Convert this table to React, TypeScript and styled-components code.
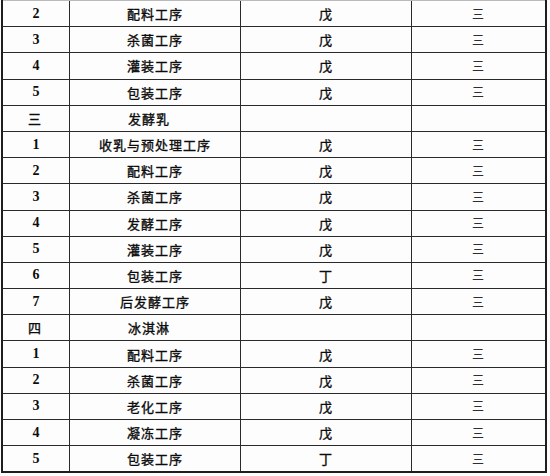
import React from 'react';
import styled, { createGlobalStyle } from 'styled-components';

const GlobalStyle = createGlobalStyle`
  html, body {
    margin: 0;
    padding: 0;
    background: #fff;
  }
`;

const Sheet = styled.div`
  width: 550px;
  height: 476px;
  overflow: hidden;
  background: #fdfdfd;
`;

const Table = styled.div`
  margin-left: 1px;
  width: 546px;
  box-sizing: border-box;
  border-left: 2px solid #1e1e1e;
  border-right: 2px solid #1e1e1e;
  border-bottom: 2px solid #1e1e1e;
  color: #0c0c0c;
`;

const Row = styled.div`
  display: grid;
  grid-template-columns: 66px 171px 171px 1fr;
  height: 26.2px;
  box-sizing: border-box;
  border-top: 1px solid #2a2a2a;

  &:first-child {
    border-top-color: #bbb;
  }

  & > div + div {
    border-left: 1px solid #2a2a2a;
  }
`;

const Cell = styled.div`
  display: flex;
  align-items: center;
  justify-content: center;
  font-family: "Noto Sans CJK SC", sans-serif;
  font-size: 13px;
  font-weight: 400;
  -webkit-text-stroke: 0.35px #0c0c0c;
  letter-spacing: 1px;
  line-height: 1;
  white-space: nowrap;
`;

const NumCell = styled(Cell)`
  font-family: "Liberation Serif", "Noto Sans CJK SC", serif;
  font-size: 14px;
  font-weight: 700;
  -webkit-text-stroke: 0;
  letter-spacing: 0;
`;

const SectionNo = styled(Cell)`
  padding-right: 2px;
`;

const SectionName = styled(Cell)`
  justify-content: flex-start;
  padding-left: 58px;
`;

const Grade = styled(Cell)`
  font-size: 12px;
  -webkit-text-stroke: 0;
  color: #2e2e2e;
`;

type Item = { no: string; name: string; cls?: string; section?: boolean };

const rows: Item[] = [
  { no: '2', name: '配料工序', cls: '戊' },
  { no: '3', name: '杀菌工序', cls: '戊' },
  { no: '4', name: '灌装工序', cls: '戊' },
  { no: '5', name: '包装工序', cls: '戊' },
  { no: '三', name: '发酵乳', section: true },
  { no: '1', name: '收乳与预处理工序', cls: '戊' },
  { no: '2', name: '配料工序', cls: '戊' },
  { no: '3', name: '杀菌工序', cls: '戊' },
  { no: '4', name: '发酵工序', cls: '戊' },
  { no: '5', name: '灌装工序', cls: '戊' },
  { no: '6', name: '包装工序', cls: '丁' },
  { no: '7', name: '后发酵工序', cls: '戊' },
  { no: '四', name: '冰淇淋', section: true },
  { no: '1', name: '配料工序', cls: '戊' },
  { no: '2', name: '杀菌工序', cls: '戊' },
  { no: '3', name: '老化工序', cls: '戊' },
  { no: '4', name: '凝冻工序', cls: '戊' },
  { no: '5', name: '包装工序', cls: '丁' },
];

export default function App() {
  return (
    <Sheet>
      <GlobalStyle />
      <Table>
        {rows.map((r, i) =>
          r.section ? (
            <Row key={i}>
              <SectionNo>{r.no}</SectionNo>
              <SectionName>{r.name}</SectionName>
              <Cell />
              <Cell />
            </Row>
          ) : (
            <Row key={i}>
              <NumCell>{r.no}</NumCell>
              <Cell>{r.name}</Cell>
              <Cell>{r.cls}</Cell>
              <Grade>三</Grade>
            </Row>
          )
        )}
      </Table>
    </Sheet>
  );
}
